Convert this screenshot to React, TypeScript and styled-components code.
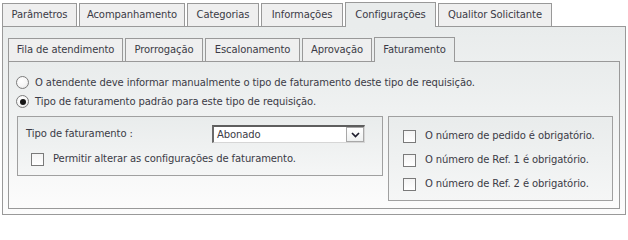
import styled, { createGlobalStyle } from "styled-components";

const GlobalStyle = createGlobalStyle`
  html, body {
    margin: 0;
    padding: 0;
    background: #fff;
  }
  body {
    font-family: "DejaVu Sans", Verdana, sans-serif;
    font-size: 10px;
    line-height: 1.2;
    letter-spacing: -0.1px;
    color: #3b3b46;
  }
`;

const panelTop = "#e9ecec";

const Page = styled.div`
  width: 624px;
  padding: 2px 2px 0 2px;
`;

const TabRow = styled.div`
  display: flex;
  align-items: flex-end;
  gap: 2px;
  height: 24px;
  position: relative;
  z-index: 1;
`;

const Tab = styled.div<{ $w: number; $active?: boolean }>`
  box-sizing: border-box;
  width: ${({ $w }) => $w}px;
  height: ${({ $active }) => ($active ? 25 : 23)}px;
  margin-bottom: ${({ $active }) => ($active ? -1 : 0)}px;
  border: 1px solid #999;
  border-bottom: none;
  background: ${({ $active }) => ($active ? panelTop : "#efefef")};
  display: flex;
  align-items: center;
  justify-content: center;
  white-space: nowrap;
  cursor: default;
`;

const Panel = styled.div`
  box-sizing: border-box;
  border: 1px solid #999;
  background: linear-gradient(to bottom, ${panelTop} 0%, #fcfcfc 100%);
  padding: 10px 5px 5px 5px;
`;

const InnerPanel = styled.div`
  box-sizing: border-box;
  border: 1px solid #999;
  background: linear-gradient(to bottom, ${panelTop} 0%, #fcfcfc 100%);
  padding: 11px 6px 7px 8px;
`;

const RadioRow = styled.label`
  display: flex;
  align-items: center;
  gap: 6px;
  height: 19px;
  margin-left: -1px;
`;

const Radio = styled.span<{ $checked?: boolean }>`
  box-sizing: border-box;
  flex: none;
  width: 13px;
  height: 13px;
  border-radius: 50%;
  border: 1px solid #7c7c7c;
  background: radial-gradient(circle at 40% 35%, #fff 0%, #f6f6f6 55%, #d6d6d6 100%);
  display: flex;
  align-items: center;
  justify-content: center;

  &::after {
    content: "";
    display: ${({ $checked }) => ($checked ? "block" : "none")};
    width: 6px;
    height: 6px;
    border-radius: 50%;
    background: #151515;
  }
`;

const BoxRow = styled.div`
  display: flex;
  align-items: flex-start;
  gap: 5px;
  margin-top: 5px;
`;

const GroupBox = styled.div<{ $w: number }>`
  box-sizing: border-box;
  width: ${({ $w }) => $w}px;
  border: 1px solid #a0a0a0;
  background: linear-gradient(to bottom, #e9ecec 0%, #f5f6f6 100%);
`;

const LeftBox = styled(GroupBox)`
  display: flex;
  flex-direction: column;
  gap: 7px;
  padding: 8px 8px 7px 8px;
`;

const RightBox = styled(GroupBox)`
  padding: 7px 0 4px 14px;
`;

const FieldRow = styled.div`
  display: flex;
  align-items: center;
  height: 18px;
`;

const FieldLabel = styled.span`
  width: 186px;
  flex: none;
`;

const SelectBox = styled.div`
  box-sizing: border-box;
  width: 153px;
  height: 18px;
  display: flex;
  align-items: center;
  background: #fff;
  border-top: 2px solid #5e5e5e;
  border-left: 2px solid #6a6a6a;
  border-right: 1px solid #d6d6d6;
  border-bottom: 1px solid #d6d6d6;
`;

const SelectValue = styled.span`
  flex: 1;
  padding-left: 3px;
  white-space: nowrap;
`;

const ArrowButton = styled.span`
  box-sizing: border-box;
  width: 18px;
  height: 15px;
  flex: none;
  display: flex;
  align-items: center;
  justify-content: center;
  border: 1px solid #a8a8a8;
  background: linear-gradient(to bottom, #ffffff 0%, #eef0f0 100%);
`;

const CheckRow = styled.label<{ $indent?: number; $h?: number }>`
  display: flex;
  align-items: center;
  gap: 9px;
  height: ${({ $h }) => $h ?? 18}px;
  padding-left: ${({ $indent }) => $indent ?? 0}px;
  white-space: nowrap;
`;

const CheckBox = styled.span`
  box-sizing: border-box;
  flex: none;
  width: 13px;
  height: 13px;
  border: 1px solid #7a7a7a;
  background: linear-gradient(to bottom, #f4f4f4 0%, #ffffff 100%);
`;

const outerTabs = [
  { label: "Parâmetros", w: 75 },
  { label: "Acompanhamento", w: 106 },
  { label: "Categorias", w: 72 },
  { label: "Informações", w: 82 },
  { label: "Configurações", w: 91, active: true },
  { label: "Qualitor Solicitante", w: 114 },
];

const innerTabs = [
  { label: "Fila de atendimento", w: 115 },
  { label: "Prorrogação", w: 78 },
  { label: "Escalonamento", w: 95 },
  { label: "Aprovação", w: 70 },
  { label: "Faturamento", w: 81, active: true },
];

const requiredChecks = [
  "O número de pedido é obrigatório.",
  "O número de Ref. 1 é obrigatório.",
  "O número de Ref. 2 é obrigatório.",
];

const App = () => {
  return (
    <Page>
      <GlobalStyle />
      <TabRow>
        {outerTabs.map((t) => (
          <Tab key={t.label} $w={t.w} $active={t.active}>
            {t.label}
          </Tab>
        ))}
      </TabRow>
      <Panel>
        <TabRow>
          {innerTabs.map((t) => (
            <Tab key={t.label} $w={t.w} $active={t.active}>
              {t.label}
            </Tab>
          ))}
        </TabRow>
        <InnerPanel>
          <RadioRow>
            <Radio />
            O atendente deve informar manualmente o tipo de faturamento deste tipo de requisição.
          </RadioRow>
          <RadioRow>
            <Radio $checked />
            Tipo de faturamento padrão para este tipo de requisição.
          </RadioRow>
          <BoxRow>
            <LeftBox $w={366}>
              <FieldRow>
                <FieldLabel>Tipo de faturamento :</FieldLabel>
                <SelectBox>
                  <SelectValue>Abonado</SelectValue>
                  <ArrowButton>
                    <svg width="9" height="6" viewBox="0 0 9 6">
                      <path d="M1 1 L4.5 4.5 L8 1" fill="none" stroke="#1c1c2c" strokeWidth="1.7" />
                    </svg>
                  </ArrowButton>
                </SelectBox>
              </FieldRow>
              <CheckRow $indent={5}>
                <CheckBox />
                Permitir alterar as configurações de faturamento.
              </CheckRow>
            </LeftBox>
            <RightBox $w={225}>
              {requiredChecks.map((c) => (
                <CheckRow key={c} $h={24}>
                  <CheckBox />
                  {c}
                </CheckRow>
              ))}
            </RightBox>
          </BoxRow>
        </InnerPanel>
      </Panel>
    </Page>
  );
};

export default App;
